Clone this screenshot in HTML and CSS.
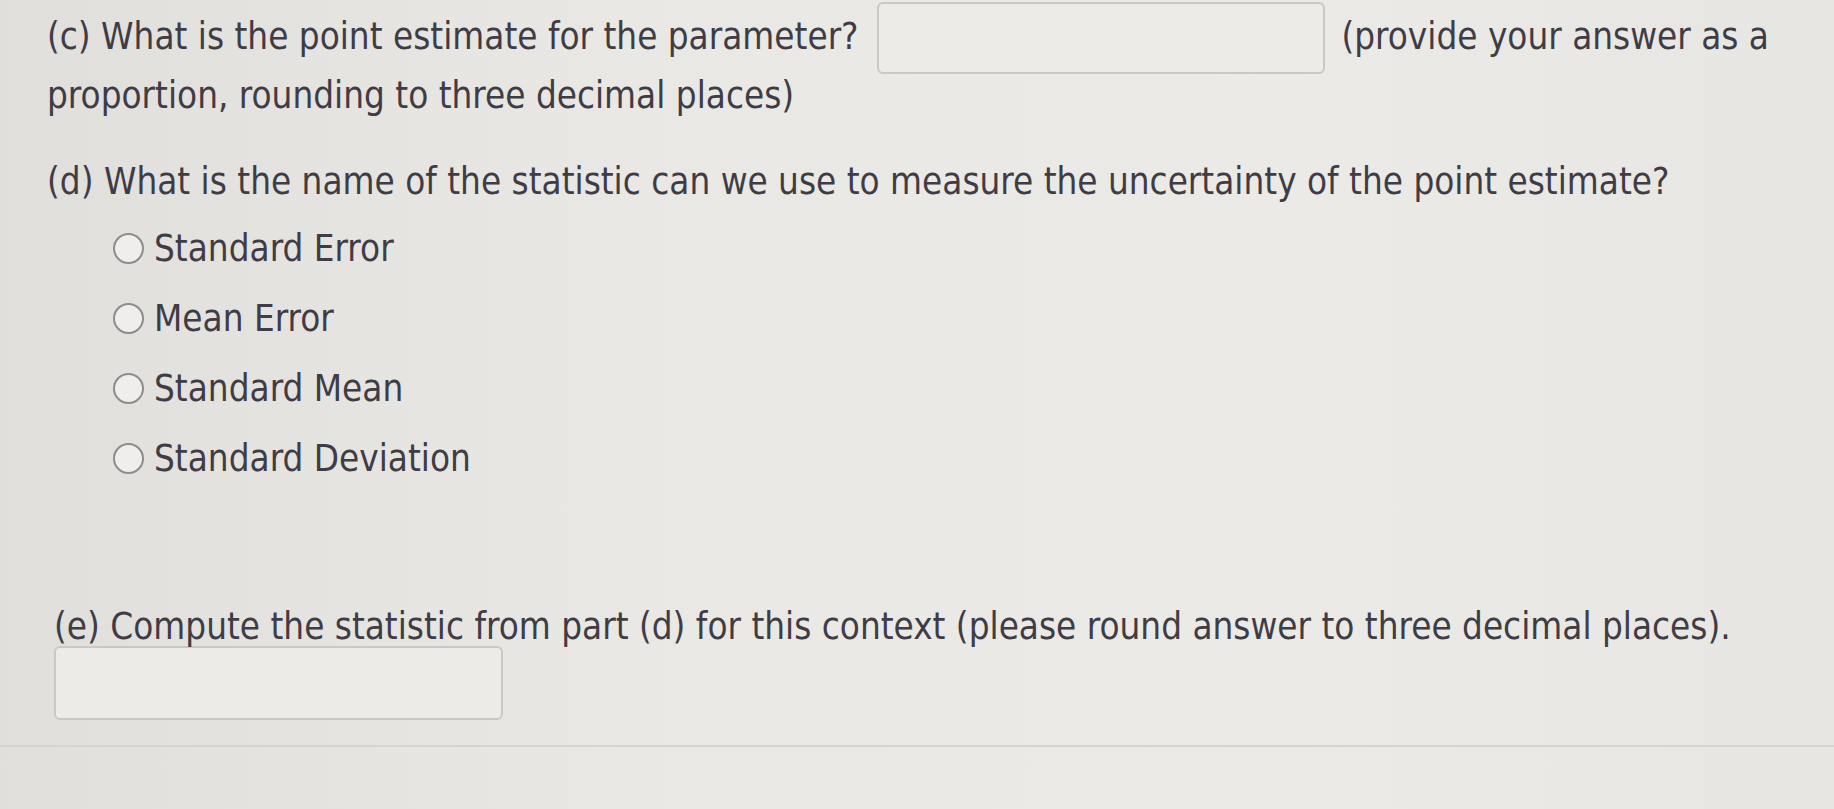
FILE: index.html
```html
<!DOCTYPE html>
<html lang="en">
<head>
<meta charset="utf-8">
<title>Point estimate questions</title>
<link rel="stylesheet" href="styles.css">
</head>
<body>
<main class="page">
  <section class="part part-c">
    <p class="q-text">(c) What is the point estimate for the parameter? <span class="answer-box answer-inline"></span> (provide your answer as a proportion, rounding to three decimal places)</p>
  </section>

  <section class="part part-d">
    <p class="q-text">(d) What is the name of the statistic can we use to measure the uncertainty of the point estimate?</p>
    <ul class="options">
      <li class="option"><span class="radio"></span><span class="opt-label">Standard Error</span></li>
      <li class="option"><span class="radio"></span><span class="opt-label">Mean Error</span></li>
      <li class="option"><span class="radio"></span><span class="opt-label">Standard Mean</span></li>
      <li class="option"><span class="radio"></span><span class="opt-label">Standard Deviation</span></li>
    </ul>
  </section>

  <section class="part part-e">
    <p class="q-text">(e) Compute the statistic from part (d) for this context (please round answer to three decimal places).</p>
    <div class="answer-box answer-block"></div>
  </section>

  <hr class="divider">
</main>
</body>
</html>
```

FILE: styles.css
```css
html, body {
  margin: 0;
  padding: 0;
}

body {
  width: 1834px;
  height: 809px;
  overflow: hidden;
  background: linear-gradient(90deg, #e0dfdb 0%, #e9e8e4 35%, #ebeae6 70%, #e7e6e2 100%);
  font-family: "DejaVu Sans Condensed", "DejaVu Sans", sans-serif;
  color: #403c45;
}

.page {
  display: flex;
  flex-direction: column;
  padding: 2px 40px 0 47px;
}

.q-text {
  margin: 0;
  font-size: 36.5px;
  line-height: 44px;
}

.answer-box {
  box-sizing: border-box;
  border: 2px solid #c9c8c4;
  border-radius: 6px;
  background: #ecebe7;
}

.answer-inline {
  display: inline-block;
  width: 448px;
  height: 72px;
  vertical-align: middle;
  margin: 0 6px 0 8px;
}

.part-d {
  margin-top: 42px;
}

.options {
  list-style: none;
  margin: 22px 0 0 0;
  padding: 0 0 0 66px;
  display: flex;
  flex-direction: column;
  gap: 26px;
}

.option {
  display: flex;
  align-items: center;
  gap: 10px;
  height: 44px;
  font-size: 36.5px;
}

.radio {
  box-sizing: border-box;
  width: 31px;
  height: 31px;
  border-radius: 50%;
  border: 2px solid #8d8b8e;
  background: #efeeea;
  flex: none;
}

.part-e {
  margin-top: 129px;
  padding-left: 7px;
}

.part-e .q-text {
  line-height: 36px;
}

.answer-block {
  width: 449px;
  height: 74px;
  margin-top: 1px;
}

.divider {
  margin: 25px -40px 0 -47px;
  border: none;
  border-top: 2px solid #d5d4d0;
}
```
